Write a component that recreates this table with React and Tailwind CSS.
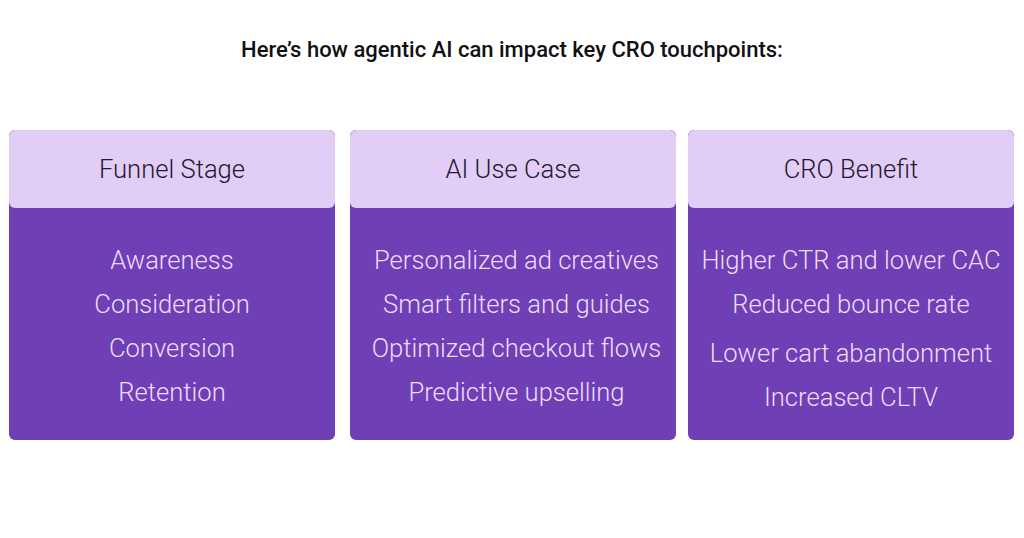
import React from 'react';

const columns = [
  {
    title: 'Funnel Stage',
    items: ['Awareness', 'Consideration', 'Conversion', 'Retention'],
    gaps: [0, 0, 0, 0],
    bodyPad: '',
  },
  {
    title: 'AI Use Case',
    items: ['Personalized ad creatives', 'Smart filters and guides', 'Optimized checkout flows', 'Predictive upselling'],
    gaps: [0, 0, 0, 0],
    bodyPad: 'pl-[7px]',
  },
  {
    title: 'CRO Benefit',
    items: ['Higher CTR and lower CAC', 'Reduced bounce rate', 'Lower cart abandonment', 'Increased CLTV'],
    gaps: [0, 0, 5, 0],
    bodyPad: '',
  },
];

const Card = ({ column, className }) => (
  <div className={`w-[326px] h-[310px] rounded-[6px] bg-[#6f3fb5] overflow-hidden flex flex-col ${className}`}>
    <div className="h-[78px] rounded-[6px] bg-[#e1cdf5] flex items-center justify-center">
      <span className="text-[25.6px] font-light text-[#241832]">{column.title}</span>
    </div>
    <div className={`flex flex-col items-center pt-[30px] ${column.bodyPad}`}>
      {column.items.map((item, idx) => (
        <div
          key={item}
          className={`h-[44px] leading-[44px] text-[25.6px] font-light text-[#ecdcfb] whitespace-nowrap ${column.gaps[idx] ? 'mt-[5px]' : ''}`}
        >
          {item}
        </div>
      ))}
    </div>
  </div>
);

export default function App() {
  return (
    <div className="w-[1024px] h-[538px] bg-white font-['Roboto',sans-serif]">
      <h1 className="pt-[36px] text-center text-[22px] leading-[28px] font-medium text-[#111111]">
        Here’s how agentic AI can impact key CRO touchpoints:
      </h1>
      <div className="flex pl-[9px] pt-[66px]">
        <Card column={columns[0]} />
        <Card column={columns[1]} className="ml-[15px]" />
        <Card column={columns[2]} className="ml-[12px]" />
      </div>
    </div>
  );
}
